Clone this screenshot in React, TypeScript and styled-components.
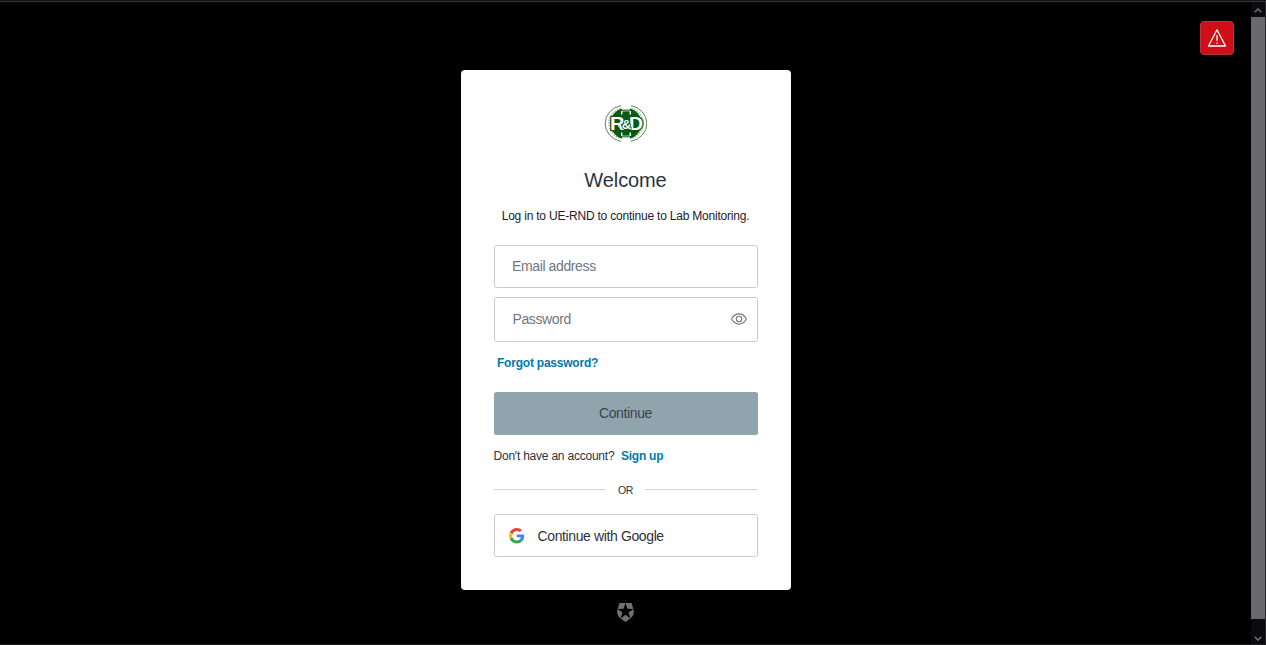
import React from "react";
import styled, { createGlobalStyle } from "styled-components";

const Global = createGlobalStyle`
  * { box-sizing: border-box; }
  body { margin: 0; background: #000; overflow: hidden; font-family: "Liberation Sans", Arial, sans-serif; color: #2d333a; }
`;

const Window = styled.div`
  display: flex;
  height: 645px;
  background: #000;
  border-top: 1px solid #111113;
  border-bottom: 1px solid #1c1c1e;
  position: relative;
`;

const TopEdge = styled.div`
  position: absolute;
  inset: 0 0 auto 0;
  height: 1px;
  background: #35363a;
`;

const Main = styled.main`
  flex: 1;
  display: flex;
  flex-direction: column;
  align-items: center;
  padding-top: 68.5px;
`;

const AlertButton = styled.button`
  position: absolute;
  top: 20px;
  left: 1200px;
  width: 34px;
  height: 34px;
  padding: 0;
  display: grid;
  place-items: center;
  background: #d00e17;
  border: 1px solid #b3383c;
  border-radius: 4px;
`;

const Card = styled.section`
  width: 330px;
  height: 520.5px;
  padding: 34.5px 33px 0;
  display: flex;
  flex-direction: column;
  background: #fff;
  border-radius: 4px;
`;

const LogoBox = styled.div`
  display: flex;
  justify-content: center;
  height: 42px;
`;

const Title = styled.h1`
  margin: 20px 0 0;
  font-size: 20px;
  font-weight: 400;
  letter-spacing: -0.1px;
  line-height: 28px;
  text-align: center;
`;

const Subtitle = styled.p`
  margin: 12px 0 0;
  font-size: 12px;
  letter-spacing: -0.21px;
  line-height: 20px;
  text-align: center;
  white-space: nowrap;
  color: #1e212a;
`;

const Field = styled.label<{ $height: number; $gap: number; $inset: number }>`
  display: flex;
  align-items: center;
  justify-content: space-between;
  height: ${(p) => p.$height}px;
  margin-top: ${(p) => p.$gap}px;
  padding: 0 10px 0 ${(p) => p.$inset}px;
  border: 1px solid #c9cace;
  border-radius: 2.5px;
  font-size: 14px;
  letter-spacing: -0.38px;
  color: #6f7780;
`;

const Link = styled.a<{ $inset?: number }>`
  color: #0079ad;
  font-size: 12px;
  font-weight: 700;
  margin-left: ${(p) => p.$inset ?? 0}px;
`;

const LinkRow = styled.div<{ $gap: number }>`
  margin-top: ${(p) => p.$gap}px;
  height: 20px;
  line-height: 20px;
  font-size: 12px;
  letter-spacing: -0.22px;
  white-space: nowrap;
`;

const Submit = styled.button`
  margin: 19px 0 0;
  height: 43px;
  flex: none;
  border: 0;
  border-radius: 2.5px;
  background: #90a4ad;
  color: #36434f;
  font: 14px "Liberation Sans", Arial, sans-serif;
  letter-spacing: -0.38px;
`;

const Divider = styled.div`
  display: flex;
  align-items: center;
  gap: 12px;
  height: 14px;
  margin-top: 16.5px;
  font-size: 10.5px;
  letter-spacing: -0.3px;
  &::before, &::after { content: ""; flex: 1; height: 1px; background: #d0d2d6; }
`;

const SocialButton = styled.button`
  display: flex;
  align-items: center;
  gap: 13px;
  flex: none;
  height: 43px;
  margin-top: 17.5px;
  padding: 0.5px 14px 0 14.5px;
  background: #fff;
  border: 1px solid #c9cace;
  border-radius: 2.5px;
  color: #2d333a;
  font: 14px "Liberation Sans", Arial, sans-serif;
  letter-spacing: -0.38px;
`;

const Badge = styled.div`
  margin-top: 12.5px;
  line-height: 0;
`;

const Scrollbar = styled.div`
  width: 15px;
  display: flex;
  flex-direction: column;
  background: #0b0b0e;
  border-right: 1px solid #29292c;
`;

const Arrow = styled.div<{ $height: number; $inset: number }>`
  height: ${(p) => p.$height}px;
  display: flex;
  justify-content: center;
  align-items: flex-end;
  padding-bottom: ${(p) => p.$inset}px;
`;

const Thumb = styled.div`
  flex: 1;
  background: #69696b;
`;

const LabLogo = () => (
  <svg width="43" height="40" viewBox="0 0 43 40">
    <g fill="none" stroke="#174f1a">
      <path d="M17 1.600A20 18.300 0 0 0 17 37.400M27 1.600A20 18.300 0 0 1 27 37.400" strokeWidth=".7" />
      <path d="M16.500 4.500A17.500 16 0 0 0 16.500 34.500M27.500 4.500A17.500 16 0 0 1 27.500 34.500" strokeWidth="1.800" strokeDasharray="1.200 1.500" opacity=".45" />
    </g>
    <ellipse cx="22" cy="19.500" rx="15.500" ry="15.500" fill="#075a12" />
    <path d="M18 1h8v6h-8zM18 32h8v6h-8z" fill="#fff" />
    <path d="M18 5.500h8v2.500h-8zM18 31h8v2.500h-8z" fill="#5f8b62" />
    <path d="M17.700 7v3.500M26.300 7v3.500M17.700 28.500v3.500M26.300 28.500v3.500" stroke="#fff" strokeWidth="1.400" />
    <g fill="#fff" stroke="#075a12" strokeWidth="2.400" strokeLinejoin="round" paintOrder="stroke" fontFamily="Liberation Sans, Arial, sans-serif" fontWeight="700">
      <text x="6" y="26" fontSize="18.500" textLength="14.500" lengthAdjust="spacingAndGlyphs">R</text>
      <text x="25" y="25.500" fontSize="18" textLength="14" lengthAdjust="spacingAndGlyphs">D</text>
      <text x="17.700" y="25.200" fontSize="13.500" strokeWidth="1.600" textLength="9.500" lengthAdjust="spacingAndGlyphs">&amp;</text>
    </g>
  </svg>
);

const Warning = () => (
  <svg width="20" height="20" viewBox="0 0 20 20" fill="none" stroke="#fff" strokeWidth="1.300" strokeLinejoin="round">
    <path d="M10 1.800 18.500 18H1.500z" />
    <path d="M10 7.200v5.600M10 14.400v1.400" />
  </svg>
);

const Eye = () => (
  <svg width="16" height="12" viewBox="0 0 16 12" fill="none" stroke="#6f7780" strokeWidth="1.100">
    <path d="M.6 6C2.500 2.500 5 .9 8 .9S13.500 2.500 15.400 6C13.500 9.500 11 11.100 8 11.100S2.500 9.500.6 6z" />
    <circle cx="8" cy="6" r="2.700" />
  </svg>
);

const GoogleMark = () => (
  <svg width="15.500" height="15.500" viewBox="0 0 48 48">
    <path fill="#EA4335" d="M24 9.500c3.540 0 6.710 1.220 9.210 3.600l6.850-6.850C35.900 2.380 30.470 0 24 0 14.620 0 6.510 5.380 2.560 13.220l7.980 6.190C12.430 13.720 17.740 9.500 24 9.500z" />
    <path fill="#4285F4" d="M46.980 24.550c0-1.570-.15-3.090-.38-4.550H24v9.020h12.940c-.58 2.960-2.260 5.480-4.780 7.180l7.730 6c4.510-4.180 7.090-10.360 7.090-17.650z" />
    <path fill="#FBBC05" d="M10.530 28.590c-.48-1.450-.76-2.990-.76-4.590s.27-3.140.76-4.590l-7.980-6.190C.92 16.460 0 20.120 0 24s.92 7.540 2.560 10.780l7.970-6.190z" />
    <path fill="#34A853" d="M24 48c6.480 0 11.930-2.130 15.890-5.810l-7.730-6c-2.150 1.450-4.920 2.300-8.160 2.300-6.260 0-11.570-4.220-13.470-9.910l-7.980 6.190C6.510 42.620 14.620 48 24 48z" />
  </svg>
);

const Shield = () => (
  <svg width="19" height="19" viewBox="0 0 24 24" fill="#717174">
    <path d="M21.98 7.448L19.62 0H4.347L2.02 7.448c-1.352 4.312.03 9.206 3.815 12.015L12.007 24l6.157-4.552c3.755-2.81 5.182-7.688 3.815-12.015l-6.16 4.58 2.343 7.45-6.157-4.597-6.158 4.58 2.358-7.433-6.188-4.55 7.63-.045L12.008 0l2.356 7.404 7.615.044z" />
  </svg>
);

const Chevron = ({ up }: { up?: boolean }) => (
  <svg width="8" height="5" viewBox="0 0 8 5" fill="none" stroke="#6f6f72" strokeWidth="1.500">
    <path d={up ? "M.7 4.200 4 .9l3.300 3.300" : "M.7.8 4 4.100 7.300.8"} />
  </svg>
);

export default function App() {
  return (
    <Window>
      <Global />
      <TopEdge />
      <Main>
        <Card>
          <LogoBox><LabLogo /></LogoBox>
          <Title>Welcome</Title>
          <Subtitle>Log in to UE-RND to continue to Lab Monitoring.</Subtitle>
          <Field $height={43} $gap={18.5} $inset={17.5}>Email address</Field>
          <Field $height={45} $gap={9} $inset={18}>Password<Eye /></Field>
          <LinkRow $gap={11}><Link $inset={3.5}>Forgot password?</Link></LinkRow>
          <Submit>Continue</Submit>
          <LinkRow $gap={11.5}>Don't have an account?<Link $inset={6.5}>Sign up</Link></LinkRow>
          <Divider>OR</Divider>
          <SocialButton><GoogleMark />Continue with Google</SocialButton>
        </Card>
        <Badge><Shield /></Badge>
      </Main>
      <Scrollbar>
        <Arrow $height={16} $inset={4}><Chevron up /></Arrow>
        <Thumb />
        <Arrow $height={25} $inset={3}><Chevron /></Arrow>
      </Scrollbar>
      <AlertButton aria-label="Warning"><Warning /></AlertButton>
    </Window>
  );
}
